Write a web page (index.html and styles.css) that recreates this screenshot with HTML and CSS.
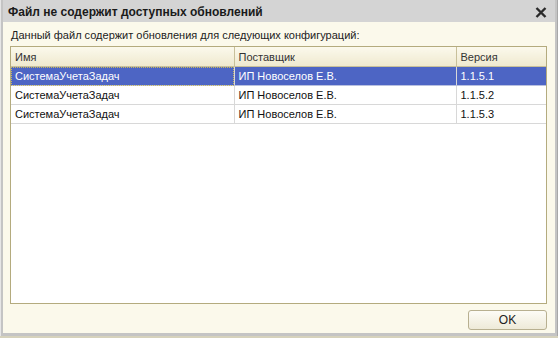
FILE: index.html
```html
<!DOCTYPE html>
<html>
<head>
    <title>Файл не содержит доступных обновлений</title>
    <meta charset="UTF-8">
    <link rel="stylesheet" href="styles.css">
</head>
<body>
    <div class="window">
        <div class="titlebar">
            <span class="title">Файл не содержит доступных обновлений</span>
            <span class="close">
                <svg width="12" height="11" viewBox="0 0 12 11">
                    <path d="M1.5 1 L10.5 10 M10.5 1 L1.5 10" stroke="#2a2a2a" stroke-width="2.4" fill="none"/>
                </svg>
            </span>
        </div>
        <div class="content">
            <p class="caption">Данный файл содержит обновления для следующих конфигураций:</p>
            <div class="grid">
                <table>
                    <colgroup>
                        <col class="col-name">
                        <col class="col-vendor">
                        <col class="col-version">
                    </colgroup>
                    <thead>
                        <tr>
                            <th>Имя</th>
                            <th>Поставщик</th>
                            <th>Версия</th>
                        </tr>
                    </thead>
                    <tbody>
                        <tr class="selected">
                            <td>СистемаУчетаЗадач</td>
                            <td>ИП Новоселов Е.В.</td>
                            <td>1.1.5.1</td>
                        </tr>
                        <tr>
                            <td>СистемаУчетаЗадач</td>
                            <td>ИП Новоселов Е.В.</td>
                            <td>1.1.5.2</td>
                        </tr>
                        <tr>
                            <td>СистемаУчетаЗадач</td>
                            <td>ИП Новоселов Е.В.</td>
                            <td>1.1.5.3</td>
                        </tr>
                    </tbody>
                </table>
            </div>
            <div class="buttons">
                <button class="ok-btn">OK</button>
            </div>
        </div>
    </div>
</body>
</html>
```

FILE: styles.css
```css
html, body {
    margin: 0;
    padding: 0;
}
body {
    width: 558px;
    height: 338px;
    background-color: #d6d2bc;
    font-family: "Liberation Sans", Arial, sans-serif;
    font-size: 11px;
}
.window {
    box-sizing: border-box;
    width: 558px;
    height: 336px;
    border-left: 1px solid #e6e6e6;
    border-right: 1px solid #a8a8a8;
    background-color: #c4c4c4;
    padding: 0 2px 3px 2px;
    display: flex;
    flex-direction: column;
}
.titlebar {
    height: 22px;
    display: flex;
    align-items: center;
    justify-content: space-between;
    padding: 0 8px 0 5px;
    background-color: #d4d4d4;
}
.title {
    font-weight: bold;
    font-size: 12px;
    color: #1a1a1a;
    padding-top: 2px;
}
.close {
    display: flex;
    padding-top: 3px;
}
.content {
    flex: 1;
    background-color: #fbf9eb;
    display: flex;
    flex-direction: column;
    padding: 0 8px 0 7px;
}
.caption {
    margin: 6px 0 4px 1px;
    color: #222;
    line-height: 14px;
}
.grid {
    height: 256px;
    border: 1px solid #b4ab7e;
    background-color: #fff;
}
table {
    width: 100%;
    border-collapse: collapse;
    table-layout: fixed;
}
.col-name {
    width: 223px;
}
.col-vendor {
    width: 222px;
}
th {
    height: 19px;
    padding: 0 0 0 4px;
    text-align: left;
    font-weight: normal;
    color: #333;
    background: linear-gradient(#fbf9ec, #efe9cf);
    border-left: 1px solid #c8c09a;
    border-bottom: 1px solid #c8c09a;
}
th:first-child, td:first-child {
    border-left: none;
}
td {
    height: 18px;
    padding: 0 0 0 4px;
    color: #111;
    border-left: 1px solid #d8d8d8;
    border-bottom: 1px solid #d8d8d8;
    white-space: nowrap;
}
.selected td {
    background-color: #4d65c4;
    color: #fff;
    border-bottom-color: #b8c0e0;
}
.selected td:first-child {
    outline: 1px dotted #c8b860;
    outline-offset: -1px;
}
.buttons {
    display: flex;
    justify-content: flex-end;
    padding-top: 6px;
}
.ok-btn {
    width: 79px;
    height: 20px;
    font-family: "Liberation Sans", Arial, sans-serif;
    font-size: 12px;
    color: #222;
    border: 1px solid #b8b090;
    border-radius: 3px;
    background: linear-gradient(#fdfcf6, #eeead8);
}
```
